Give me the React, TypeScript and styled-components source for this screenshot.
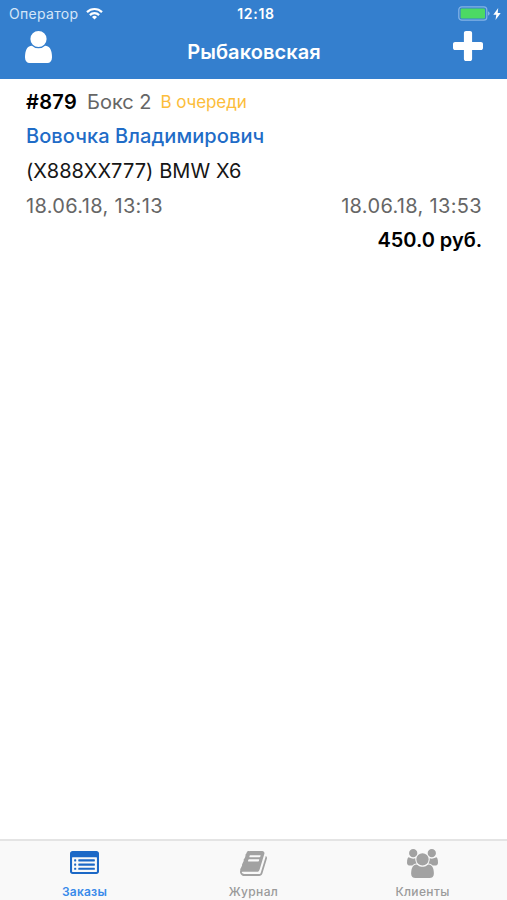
import React from 'react';
import styled, { createGlobalStyle } from 'styled-components';

const GlobalStyle = createGlobalStyle`
  *, *::before, *::after { box-sizing: border-box; }
  html, body { margin: 0; padding: 0; }
  body { background: #fff; font-family: Inter, "Liberation Sans", sans-serif; }
`;

const Screen = styled.div`
  display: flex;
  flex-direction: column;
  width: 100%;
  height: 100vh;
  overflow: hidden;
  background: #fff;
`;

const Header = styled.header`
  flex: none;
  height: 79px;
  background: #347fce;
  color: #fff;
`;

const StatusBar = styled.div`
  display: grid;
  grid-template-columns: 1fr auto 1fr;
  align-items: center;
  height: 27px;
  padding: 0 6px 0 9px;
  line-height: 18px;
`;

const Carrier = styled.div`
  display: flex;
  align-items: center;
  gap: 8px;
  font-size: 14px;
  letter-spacing: 0.3px;
  color: #d4e6f8;
`;

const Clock = styled.div`
  font-size: 14px;
  font-weight: 600;
  letter-spacing: 0.7px;
  padding-left: 2px;
`;

const Power = styled.div`
  display: flex;
  align-items: center;
  justify-content: flex-end;
  gap: 3px;
`;

const NavBar = styled.div`
  display: grid;
  grid-template-columns: 1fr auto 1fr;
  height: 52px;
  padding: 4px 24px 0 25px;
`;

const NavButton = styled.button<{ $end?: boolean }>`
  display: flex;
  justify-self: ${(p) => (p.$end ? 'end' : 'start')};
  align-self: start;
  padding: 0;
  border: 0;
  background: none;
  color: inherit;
`;

const Title = styled.h1`
  margin: 7px 0 0;
  font-size: 20px;
  line-height: 28px;
  font-weight: 600;
  letter-spacing: 0.1px;
`;

const Orders = styled.main`
  flex: 1;
  padding: 5.5px 25px 0 26px;
`;

const Order = styled.article`
  display: flex;
  flex-direction: column;
  font-size: 20px;
`;

const Row = styled.div<{ $justify?: string }>`
  display: flex;
  align-items: center;
  justify-content: ${(p) => p.$justify ?? 'flex-start'};
  height: 34.6px;
  white-space: pre;
`;

const Text = styled.span<{ $color?: string; $weight?: number; $size?: number; $track?: number; $gap?: number }>`
  color: ${(p) => p.$color ?? '#161616'};
  font-weight: ${(p) => p.$weight ?? 400};
  font-size: ${(p) => p.$size ?? 20}px;
  letter-spacing: ${(p) => p.$track ?? 0}px;
  margin-left: ${(p) => p.$gap ?? 0}px;
`;

const TabBar = styled.nav`
  flex: none;
  display: grid;
  grid-template-columns: repeat(3, 1fr);
  height: 61px;
  border-top: 2px solid #e4e4e4;
  background: #f9f9f9;
`;

const Tab = styled.a<{ $active?: boolean }>`
  display: flex;
  flex-direction: column;
  align-items: center;
  color: ${(p) => (p.$active ? '#1b68c6' : '#a2a2a2')};
`;

const TabIcon = styled.div<{ $top: number }>`
  display: flex;
  align-items: flex-start;
  height: 37px;
  padding-top: ${(p) => p.$top}px;
`;

const TabLabel = styled.span<{ $active?: boolean; $track: number }>`
  margin-top: 6px;
  font-size: 12px;
  line-height: 16px;
  font-weight: ${(p) => (p.$active ? 600 : 500)};
  letter-spacing: ${(p) => p.$track}px;
  color: ${(p) => (p.$active ? '#398bea' : '#9b9b9b')};
`;

interface GlyphProps {
  box: string;
  width: number;
  height: number;
  d: string;
}

const Glyph = ({ box, width, height, d }: GlyphProps) => (
  <svg viewBox={box} width={width} height={height} preserveAspectRatio="none" fill="currentColor" aria-hidden="true">
    <path d={d} />
  </svg>
);

const USER =
  'M1536 1399q0 109-62.5 187t-150.5 78h-854q-88 0-150.5-78t-62.5-187q0-85 8.5-160.5t31.5-152 58.5-131 94-89 134.5-34.5q131 128 313 128t313-128q76 0 134.5 34.5t94 89 58.5 131 31.5 152 8.5 160.5zm-256-887q0 159-112.5 271.5t-271.5 112.5-271.5-112.5-112.5-271.5 112.5-271.5 271.5-112.5 271.5 112.5 112.5 271.5z';
const PLUS =
  'M1600 736v192q0 40-28 68t-68 28h-416v416q0 40-28 68t-68 28h-192q-40 0-68-28t-28-68v-416h-416q-40 0-68-28t-28-68v-192q0-40 28-68t68-28h416v-416q0-40 28-68t68-28h192q40 0 68 28t28 68v416h416q40 0 68 28t28 68z';
const BULLET = 'v64q0 13-9.5 22.5t-22.5 9.5h-64q-13 0-22.5-9.5t-9.5-22.5v-64q0-13 9.5-22.5t22.5-9.5h64q13 0 22.5 9.5t9.5 22.5z';
const LINE = 'v64q0 13-9.5 22.5t-22.5 9.5h-960q-13 0-22.5-9.5t-9.5-22.5v-64q0-13 9.5-22.5t22.5-9.5h960q13 0 22.5 9.5t9.5 22.5z';
const LIST =
  [1184, 928, 672].map((y) => `M384 ${y}${BULLET}M1536 ${y}${LINE}`).join('') +
  'M1664 1376v-832q0-13-9.5-22.5t-22.5-9.5h-1472q-13 0-22.5 9.5t-9.5 22.5v832q0 13 9.5 22.5t22.5 9.5h1472q13 0 22.5-9.5t9.5-22.5zm128-1088v1088q0 66-47 113t-113 47h-1472q-66 0-113-47t-47-113v-1088q0-66 47-113t113-47h1472q66 0 113 47t47 113z';
const BOOK =
  'M1703 478q40 57 18 129l-275 906q-19 64-76.5 107.5t-122.5 43.5h-923q-77 0-148.5-53.5t-99.5-131.5q-24-67-2-127 0-4 3-27t4-37q1-8-3-21.5t-3-19.5q2-11 8-21t16.5-23.5 16.5-23.5q23-38 45-91.5t30-91.5q3-10 .5-30t-.5-28q3-11 17-28t17-23q21-36 42-92t25-90q1-9-2.5-32t.5-28q4-13 22-30.5t22-22.5q19-26 42.5-84.5t27.5-96.5q1-8-3-25.5t-2-26.5q2-8 9-18t18-23 17-21q8-12 16.5-30.5t15-35 16-36 19.5-32 26.5-23.5 36-11.5 47.5 5.5l-1 3q38-9 51-9h761q74 0 114 56t18 130l-274 906q-36 119-71.5 153.5t-128.5 34.5h-869q-27 0-38 15-11 16-1 43 24 70 144 70h923q29 0 56-15.5t35-41.5l300-987q7-22 5-57 38 15 59 43zm-1064 2q-4 13 2 22.5t20 9.5h608q13 0 25.5-9.5t16.5-22.5l21-64q4-13-2-22.5t-20-9.5h-608q-13 0-25.5 9.5t-16.5 22.5zm-83 256q-4 13 2 22.5t20 9.5h608q13 0 25.5-9.5t16.5-22.5l21-64q4-13-2-22.5t-20-9.5h-608q-13 0-25.5 9.5t-16.5 22.5z';
const USERS =
  'M657 896q-162 5-265 128h-134q-82 0-138-40.5t-56-118.5q0-353 124-353 6 0 43.5 21t97.5 42.5 119 21.5q67 0 133-23-5 37-5 66 0 139 81 256zm1071 637q0 120-73 189.5t-194 69.5h-874q-121 0-194-69.5t-73-189.5q0-53 3.5-103.5t14-109 26.5-108.5 43-97.5 62-81 85.5-53.5 111.5-20q10 0 43 21.5t73 48 107 48 135 21.5 135-21.5 107-48 73-48 43-21.5q61 0 111.5 20t85.5 53.5 62 81 43 97.5 26.5 108.5 14 109 3.5 103.5zm-1024-1277q0 106-75 181t-181 75-181-75-75-181 75-181 181-75 181 75 75 181zm704 384q0 159-112.5 271.5t-271.5 112.5-271.5-112.5-112.5-271.5 112.5-271.5 271.5-112.5 271.5 112.5 112.5 271.5zm576 225q0 78-56 118.5t-138 40.5h-134q-103-123-265-128 81-117 81-256 0-29-5-66 66 23 133 23 59 0 119-21.5t97.5-42.5 43.5-21q124 0 124 353zm-128-609q0 106-75 181t-181 75-181-75-75-181 75-181 181-75 181 75 75 181z';

const Wifi = () => (
  <svg width="17" height="13" viewBox="0 0 17 13" fill="none" stroke="#fff" strokeWidth="2.2" aria-hidden="true">
    <path d="M1 5.1a10.6 10.6 0 0 1 15 0" />
    <path d="M3.9 8.1a6.5 6.5 0 0 1 9.2 0" />
    <path d="M8.5 12.6 6 10.1a3.5 3.5 0 0 1 5 0z" fill="#fff" stroke="none" />
  </svg>
);

const Battery = () => (
  <svg width="32" height="15" viewBox="0 0 32 15" aria-hidden="true">
    <rect x="0.8" y="0.8" width="28" height="13.4" rx="3" fill="none" stroke="#84b4e6" strokeWidth="1.2" />
    <rect x="2.6" y="2.6" width="24.4" height="9.8" rx="1.2" fill="#4cd964" />
    <path d="M30 5.2q1.7.7 1.7 2.3T30 9.8z" fill="#84b4e6" />
  </svg>
);

const Bolt = () => (
  <svg width="8" height="12" viewBox="0 0 8 12" fill="#fff" aria-hidden="true">
    <path d="M5.2 0 .3 6.7h3L2.5 12l5.2-7h-3z" />
  </svg>
);

const tabs = [
  { label: 'Заказы', active: true, track: 0.2, top: 10, icon: <Glyph box="0 128 1792 1408" width={29} height={23} d={LIST} /> },
  { label: 'Журнал', active: false, track: 0.35, top: 10, icon: <Glyph box="63 128 1666 1536" width={27} height={25} d={BOOK} /> },
  { label: 'Клиенты', active: false, track: 0.35, top: 8, icon: <Glyph box="64 0 1920 1792" width={31} height={29} d={USERS} /> },
];

export default function App() {
  return (
    <Screen>
      <GlobalStyle />
      <Header>
        <StatusBar>
          <Carrier>
            Оператор
            <Wifi />
          </Carrier>
          <Clock>12:18</Clock>
          <Power>
            <Battery />
            <Bolt />
          </Power>
        </StatusBar>
        <NavBar>
          <NavButton aria-label="Профиль">
            <Glyph box="256 128 1280 1536" width={27} height={32} d={USER} />
          </NavButton>
          <Title>Рыбаковская</Title>
          <NavButton $end aria-label="Добавить">
            <Glyph box="192 128 1408 1408" width={30} height={30} d={PLUS} />
          </NavButton>
        </NavBar>
      </Header>
      <Orders>
        <Order>
          <Row>
            <Text $color="#000" $weight={600} $track={0.3}>#879</Text>
            <Text $color="#666" $gap={10}>Бокс 2</Text>
            <Text $color="#fcbd3b" $size={17} $gap={9} $track={-0.1}>В очереди</Text>
          </Row>
          <Row>
            <Text $color="#1f6cc7" $weight={500} $track={0.08}>Вовочка Владимирович</Text>
          </Row>
          <Row>
            <Text $track={0.08}>(X888XX777) BMW X6</Text>
          </Row>
          <Row $justify="space-between">
            <Text $color="#666" $track={0.33}>18.06.18, 13:13</Text>
            <Text $color="#666" $track={0.33}>18.06.18, 13:53</Text>
          </Row>
          <Row $justify="flex-end">
            <Text $color="#000" $weight={600} $track={-0.05}>450.0 руб.</Text>
          </Row>
        </Order>
      </Orders>
      <TabBar>
        {tabs.map((t) => (
          <Tab key={t.label} $active={t.active}>
            <TabIcon $top={t.top}>{t.icon}</TabIcon>
            <TabLabel $active={t.active} $track={t.track}>{t.label}</TabLabel>
          </Tab>
        ))}
      </TabBar>
    </Screen>
  );
}
